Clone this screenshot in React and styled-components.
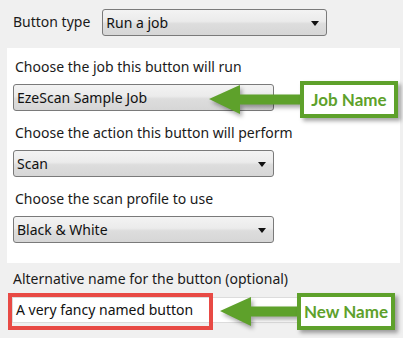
import styled, { createGlobalStyle } from "styled-components";

const GlobalStyle = createGlobalStyle`
  html, body {
    margin: 0;
    padding: 0;
    background: #f0f0f0;
  }
  body {
    font-family: "Noto Sans", "Open Sans", sans-serif;
    color: #1a1a1a;
  }
`;

const App = () => {
  return (
    <Page>
      <GlobalStyle />
      <TopRow>
        <Label>Button type</Label>
        <Select width={225}>
          <span>Run a job</span>
          <Caret />
        </Select>
      </TopRow>
      <Panel>
        <Field>
          <PanelLabel>Choose the job this button will run</PanelLabel>
          <Select width={261}>
            <span>EzeScan Sample Job</span>
          </Select>
        </Field>
        <Field>
          <PanelLabel>Choose the action this button will perform</PanelLabel>
          <Select width={261}>
            <span>Scan</span>
            <Caret />
          </Select>
        </Field>
        <Field>
          <PanelLabel>Choose the scan profile to use</PanelLabel>
          <Select width={261}>
            <span>Black &amp; White</span>
            <Caret />
          </Select>
        </Field>
      </Panel>
      <Bottom>
        <Label>Alternative name for the button (optional)</Label>
        <InputWrap>
          <TextInput>A very fancy named button</TextInput>
          <Highlight />
        </InputWrap>
      </Bottom>

      <Arrow top={85} left={209} width={92} />
      <Callout top={81} left={300}>Job Name</Callout>

      <Arrow top={297} left={220} width={78} />
      <Callout top={293} left={297}>New Name</Callout>
    </Page>
  );
};

const Arrow = ({ top, left, width }) => (
  <ArrowSvg
    style={{ top, left }}
    width={width}
    height={30}
    viewBox={`0 0 ${width} 30`}
  >
    <polygon
      points={`0,14 31,0 31,9.5 ${width},9.5 ${width},19.5 31,19.5 31,29`}
      fill="#5ea12b"
    />
  </ArrowSvg>
);

const Page = styled.div`
  position: relative;
  width: 403px;
  height: 338px;
  background: #f0f0f0;
  overflow: hidden;
`;

const TopRow = styled.div`
  height: 48px;
  box-sizing: border-box;
  padding: 9px 0 0 13px;
  display: flex;
  align-items: flex-start;
  gap: 12px;
  span {
    line-height: 26px;
  }
`;

const Label = styled.span`
  font-size: 14px;
  line-height: 18px;
  white-space: nowrap;
`;

const PanelLabel = styled(Label)`
  padding-left: 2px;
`;

const Panel = styled.div`
  margin-left: 7px;
  width: 393px;
  height: 215px;
  box-sizing: border-box;
  background: #ffffff;
  padding: 10px 0 0 6px;
  display: flex;
  flex-direction: column;
  gap: 13px;
`;

const Field = styled.div`
  display: flex;
  flex-direction: column;
  gap: 8px;
`;

const Select = styled.div`
  position: relative;
  width: ${(p) => p.width}px;
  height: 27px;
  box-sizing: border-box;
  border: 1px solid #7a7a7a;
  border-radius: 3px;
  background: linear-gradient(#f3f3f3 0%, #ebebeb 45%, #dddddd 55%, #d6d6d6 100%);
  display: flex;
  align-items: center;
  padding: 0 0 0 3px;
  font-size: 14px;
  color: #111;
  span {
    line-height: 25px;
  }
`;

const Caret = styled.i`
  position: absolute;
  right: 7px;
  top: 11px;
  width: 0;
  height: 0;
  border-left: 4px solid transparent;
  border-right: 4px solid transparent;
  border-top: 5px solid #111;
`;

const Bottom = styled.div`
  padding: 7px 0 0 13px;
  display: flex;
  flex-direction: column;
  gap: 9px;
`;

const InputWrap = styled.div`
  position: relative;
  margin-left: -1px;
`;

const TextInput = styled.div`
  width: 288px;
  height: 26px;
  box-sizing: border-box;
  border: 1px solid #dcdcdc;
  background: #ffffff;
  font-size: 14px;
  line-height: 24px;
  padding-left: 3px;
  color: #111;
`;

const Highlight = styled.div`
  position: absolute;
  left: -4px;
  top: -4px;
  width: 205px;
  height: 37px;
  box-sizing: border-box;
  border: 4px solid #e84a45;
`;

const ArrowSvg = styled.svg`
  position: absolute;
  filter: drop-shadow(2px 3px 2px rgba(0, 0, 0, 0.35));
`;

const Callout = styled.div`
  position: absolute;
  top: ${(p) => p.top}px;
  left: ${(p) => p.left}px;
  width: 98px;
  height: 37px;
  box-sizing: border-box;
  border: 4px solid #5ea12b;
  background: #ffffff;
  box-shadow: 3px 3px 4px rgba(0, 0, 0, 0.35);
  display: flex;
  align-items: center;
  justify-content: center;
  font-family: "Lato", "Open Sans", sans-serif;
  font-weight: 700;
  font-size: 17px;
  color: #5ea12b;
`;

export default App;
